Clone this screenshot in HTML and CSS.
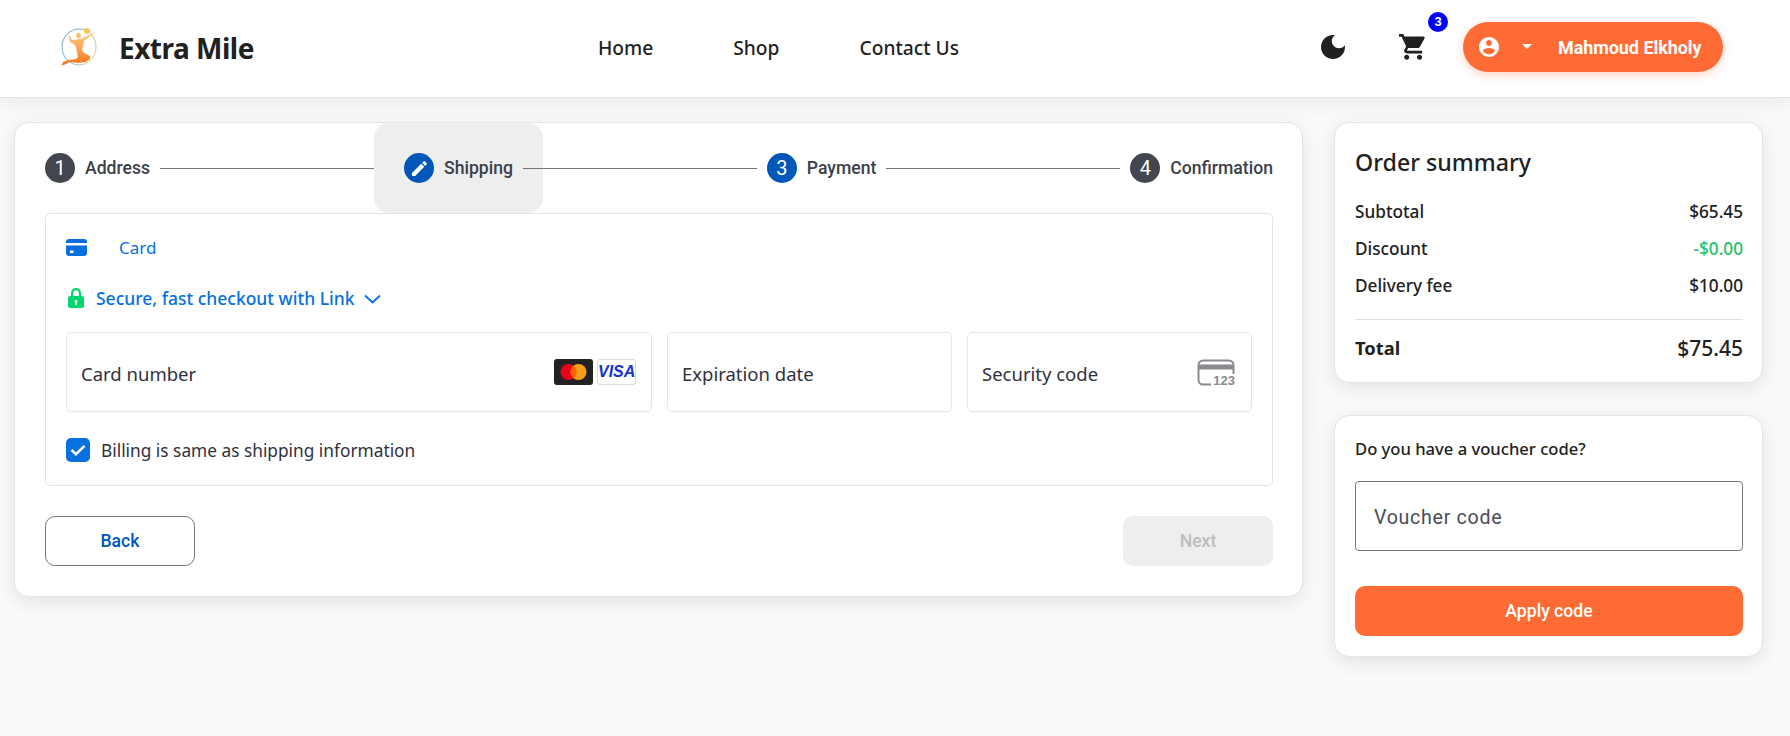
FILE: index.html
```html
<!DOCTYPE html>
<html lang="en">
<head>
    <meta charset="UTF-8">
    <title>Extra Mile - Checkout</title>
    <link rel="stylesheet" href="styles.css">
</head>
<body>
<header class="topbar">
    <a class="brand" href="#">
        <svg class="brand-logo" viewBox="0 0 38 40">
            <defs>
                <linearGradient id="ring" x1="0" y1="0" x2="1" y2="0.6">
                    <stop offset="0" stop-color="#4a86c8"/>
                    <stop offset="0.6" stop-color="#6f9fc9"/>
                    <stop offset="1" stop-color="#d9b860"/>
                </linearGradient>
                <linearGradient id="body" x1="0" y1="0" x2="0" y2="1">
                    <stop offset="0" stop-color="#fcd08a"/>
                    <stop offset="1" stop-color="#f5761f"/>
                </linearGradient>
            </defs>
            <ellipse cx="19" cy="20" rx="17" ry="18" fill="none" stroke="url(#ring)" stroke-width="0.8"/>
            <circle cx="27" cy="4" r="3" fill="#fbc64f"/>
            <circle cx="18.500" cy="8.500" r="2.500" fill="#fbbf73"/>
            <path fill="url(#body)" d="M37 4.500 29 10 24 14 23 19 22 23 24 26 30 29 30 32 26 35 18 36 10 35 5 37.500 1.500 38.500 3 35 8 33 16 32 18 30 17 25 16 20 14 17 10 15 8.500 9.500 10 9 11.500 12.500 15 13 18 12 22 11.500 29 8z"/>
        </svg>
        <span class="brand-name">Extra Mile</span>
    </a>
    <nav class="main-nav">
        <a href="#">Home</a>
        <a href="#">Shop</a>
        <a href="#">Contact Us</a>
    </nav>
    <div class="top-actions">
        <svg class="moon" viewBox="3 3 18 18"><path d="M12 3c-4.970 0-9 4.030-9 9s4.030 9 9 9 9-4.030 9-9c0-.46-.04-.92-.1-1.360-.98 1.370-2.580 2.260-4.400 2.260-2.980 0-5.400-2.420-5.400-5.400 0-1.810.89-3.420 2.260-4.400-.44-.06-.9-.1-1.360-.1z"/></svg>
        <div class="cart">
            <svg class="cart-icon" viewBox="1 2 21 20"><path d="M7 18c-1.100 0-1.990.9-1.990 2S5.900 22 7 22s2-.9 2-2-.9-2-2-2zM1 2v2h2l3.600 7.590-1.350 2.450c-.16.28-.25.61-.25.96 0 1.100.9 2 2 2h12v-2H7.420c-.14 0-.25-.11-.25-.25l.03-.12.9-1.830h7.450c.75 0 1.410-.41 1.750-1.030l3.580-6.490c.08-.14.12-.31.12-.48 0-.55-.45-1-1-1H5.210l-.94-2H1zm16 16c-1.100 0-1.990.9-1.990 2s.89 2 1.990 2 2-.9 2-2-.9-2-2-2z"/></svg>
            <span class="cart-badge">3</span>
        </div>
        <button class="profile-btn">
            <svg class="profile-icon" viewBox="2 2 20 20"><path d="M12 2C6.480 2 2 6.480 2 12s4.480 10 10 10 10-4.480 10-10S17.520 2 12 2zm0 3c1.660 0 3 1.340 3 3s-1.340 3-3 3-3-1.340-3-3 1.340-3 3-3zm0 14.200c-2.500 0-4.710-1.280-6-3.220.03-1.990 4-3.080 6-3.080 1.990 0 5.970 1.090 6 3.080-1.290 1.940-3.500 3.220-6 3.220z"/></svg>
            <span class="caret"></span>
            <span class="profile-name">Mahmoud Elkholy</span>
        </button>
    </div>
</header>

<main class="checkout">
    <section class="card checkout-card">
        <div class="stepper">
            <div class="step">
                <span class="step-num">1</span>
                <span class="step-label">Address</span>
            </div>
            <div class="step-line"></div>
            <div class="step step-current">
                <span class="step-num step-blue">
                    <svg class="edit-icon" viewBox="3 3 18 18"><path d="M3 17.250V21h3.750L17.810 9.940l-3.750-3.750L3 17.250zM20.710 7.040c.39-.39.39-1.020 0-1.410l-2.340-2.340c-.39-.39-1.020-.39-1.410 0l-1.830 1.830 3.750 3.750 1.830-1.830z"/></svg>
                </span>
                <span class="step-label">Shipping</span>
            </div>
            <div class="step-line"></div>
            <div class="step">
                <span class="step-num step-blue">3</span>
                <span class="step-label">Payment</span>
            </div>
            <div class="step-line"></div>
            <div class="step">
                <span class="step-num">4</span>
                <span class="step-label">Confirmation</span>
            </div>
        </div>

        <div class="pay-box">
            <div class="pay-tab">
                <svg class="tab-icon" viewBox="0 0 21 17"><path d="M0 3a3 3 0 0 1 3-3h15a3 3 0 0 1 3 3v1H0zM0 6.500h21V14a3 3 0 0 1-3 3H3a3 3 0 0 1-3-3zM4 11.500v2.500h3.500v-2.500z"/></svg>
                <span>Card</span>
            </div>
            <div class="link-row">
                <svg class="lock-icon" viewBox="0 0 16 20"><path d="M3 8V5a5 5 0 0 1 10 0v3h1a2 2 0 0 1 2 2v8a2 2 0 0 1-2 2H2a2 2 0 0 1-2-2v-8a2 2 0 0 1 2-2zm2.200 0h5.600V5a2.800 2.800 0 0 0-5.600 0zM8 12a1.500 1.500 0 0 0-.8 2.800V17h1.600v-2.200A1.500 1.500 0 0 0 8 12z" fill-rule="evenodd"/></svg>
                <span class="link-text">Secure, fast checkout with Link</span>
                <svg class="chevron" viewBox="0 0 17 10"><path d="M1 1.500 8.500 8.500 16 1.500" fill="none" stroke="#0570de" stroke-width="1.800"/></svg>
            </div>
            <div class="field-row">
                <div class="field field-wide">
                    <span>Card number</span>
                    <div class="card-logos">
                        <svg class="mc-logo" viewBox="0 0 39 26">
                            <rect width="39" height="26" rx="3" fill="#222"/>
                            <circle cx="14.500" cy="13" r="8" fill="#eb001b"/>
                            <circle cx="24.500" cy="13" r="8" fill="#f79e1b"/>
                            <path d="M19.500 6.750a8 8 0 0 1 0 12.500 8 8 0 0 1 0-12.500z" fill="#ff5f00"/>
                        </svg>
                        <span class="visa-logo">VISA</span>
                    </div>
                </div>
                <div class="field"><span>Expiration date</span></div>
                <div class="field">
                    <span>Security code</span>
                    <div class="cvc-icon">
                        <svg class="cvc-card" viewBox="0 0 38 27">
                            <path d="M14 25.500H6a4.500 4.500 0 0 1-4.500-4.500V6A4.500 4.500 0 0 1 6 1.500h26A4.500 4.500 0 0 1 36.500 6v9" fill="none" stroke="#8a8a8f" stroke-width="2"/>
                            <rect x="1" y="5.500" width="36" height="5" fill="#8a8a8f"/>
                        </svg>
                        <span class="cvc-text">123</span>
                    </div>
                </div>
            </div>
            <div class="billing-row">
                <span class="check-box">
                    <svg viewBox="0 0 16 12"><path d="M1.500 6 6 10.200 14.500 1.800" fill="none" stroke="#fff" stroke-width="2.600"/></svg>
                </span>
                <span>Billing is same as shipping information</span>
            </div>
        </div>

        <div class="form-actions">
            <button class="btn btn-back">Back</button>
            <button class="btn btn-next">Next</button>
        </div>
    </section>

    <aside class="side-col">
        <section class="card summary-card">
            <h2 class="summary-title">Order summary</h2>
            <div class="summary-row"><span>Subtotal</span><span>$65.45</span></div>
            <div class="summary-row"><span>Discount</span><span class="discount">-$0.00</span></div>
            <div class="summary-row"><span>Delivery fee</span><span>$10.00</span></div>
            <div class="summary-total"><strong>Total</strong><span class="total-price">$75.45</span></div>
        </section>
        <section class="card voucher-card">
            <div class="voucher-title">Do you have a voucher code?</div>
            <div class="voucher-input">Voucher code</div>
            <button class="btn btn-apply">Apply code</button>
        </section>
    </aside>
</main>
</body>
</html>
```

FILE: styles.css
```css
* {
    box-sizing: border-box;
}
body {
    margin: 0;
    min-height: 736px;
    background: #fafafa;
    color: #212121;
    font-family: "Noto Sans", sans-serif;
    overflow: hidden;
}
a {
    color: inherit;
    text-decoration: none;
}
button {
    border: 0;
    font-family: Roboto, sans-serif;
}

/* top bar */
.topbar {
    height: 98px;
    display: flex;
    align-items: center;
    padding: 0 67px 4px 60px;
    background: #fff;
    border-bottom: 1px solid #e2e2e2;
    box-shadow: 0 4px 20px rgba(0, 0, 0, .08);
}
.brand {
    display: flex;
    align-items: center;
    gap: 21px;
    width: 538px;
}
.brand-logo {
    width: 38px;
    height: 40px;
}
.brand-name {
    padding-top: 2px;
    font-size: 28px;
    font-weight: 700;
    letter-spacing: -.5px;
}
.main-nav {
    display: flex;
    gap: 80px;
    padding-top: 2px;
    font-size: 19.2px;
    font-weight: 500;
}
.top-actions {
    margin-left: auto;
    display: flex;
    align-items: center;
}
.moon {
    width: 24px;
    height: 24px;
    fill: #212121;
}
.cart {
    position: relative;
    margin-left: 54px;
    height: 26px;
}
.cart-icon {
    width: 27px;
    height: 26px;
    fill: #212121;
}
.cart-badge {
    position: absolute;
    top: -22px;
    left: 29px;
    width: 20px;
    height: 20px;
    border-radius: 50%;
    background: #0000ff;
    color: #fff;
    font: 700 13px/20px "Liberation Sans", sans-serif;
    text-align: center;
}
.profile-btn {
    width: 260px;
    height: 50px;
    margin-left: 37px;
    padding: 0 20px 0 16px;
    display: flex;
    align-items: center;
    border-radius: 25px;
    background: #ff6b35;
    color: #fff;
    box-shadow: 0 3px 10px rgba(255, 107, 53, .3);
}
.profile-icon {
    width: 20px;
    height: 20px;
    fill: #fff;
}
.caret {
    margin-left: 23px;
    border-left: 5px solid transparent;
    border-right: 5px solid transparent;
    border-top: 5px solid #fff;
}
.profile-name {
    margin-left: 26px;
    padding-top: 1px;
    font-size: 17.9px;
    font-weight: 700;
    white-space: nowrap;
}

/* page columns */
.checkout {
    display: flex;
    align-items: flex-start;
    gap: 31px;
    padding: 24px 27px 0 14px;
}
.card {
    background: #fff;
    border: 1px solid #e4e4e4;
    border-radius: 15px;
    box-shadow: 0 5px 20px rgba(0, 0, 0, .1);
}
.checkout-card {
    flex: 1;
    height: 475px;
    padding: 0 29px 0 30px;
}
.side-col {
    width: 429px;
    display: flex;
    flex-direction: column;
    gap: 32px;
}

/* stepper */
.stepper {
    display: flex;
    align-items: flex-start;
    height: 90px;
}
.step {
    display: flex;
    align-items: flex-start;
    gap: 10px;
    height: 90px;
    margin: 0 -30px;
    padding: 30px;
    border-radius: 15px;
    font-family: Roboto, sans-serif;
    font-size: 17.6px;
    font-weight: 500;
    color: #3c3f47;
}
.step-current {
    background: #eeeeee;
}
.step-num {
    width: 30px;
    height: 30px;
    display: flex;
    align-items: center;
    justify-content: center;
    border-radius: 50%;
    background: #43464f;
    color: #fff;
    font-size: 20px;
    font-weight: 400;
}
.step-blue {
    background: #0057b8;
}
.step-label {
    line-height: 30px;
}
.edit-icon {
    width: 15px;
    height: 15px;
    fill: #fff;
}
.step-line {
    flex: 1;
    height: 1px;
    margin: 45px 10px 0;
    background: #757575;
}

/* payment box */
.pay-box {
    height: 273px;
    padding: 23px 20px 0;
    border: 1px solid #e4e4e4;
    border-radius: 5px;
    color: #30313d;
}
.pay-tab {
    display: flex;
    align-items: center;
    gap: 32px;
    height: 20px;
    font-size: 17px;
    color: #0570de;
}
.tab-icon {
    width: 21px;
    height: 17px;
    fill: #0570de;
}
.link-row {
    display: flex;
    align-items: center;
    margin: 29px 0 0 2px;
    height: 24px;
    font-size: 17.5px;
    font-weight: 500;
    color: #0570de;
}
.lock-icon {
    width: 16px;
    height: 20px;
    fill: #00d66f;
}
.link-text {
    margin-left: 12px;
}
.chevron {
    width: 17px;
    height: 10px;
    margin: 2px 0 0 10px;
}
.field-row {
    display: flex;
    gap: 15px;
    margin-top: 22px;
}
.field {
    flex: 1;
    height: 80px;
    display: flex;
    align-items: center;
    justify-content: space-between;
    padding: 3px 14px 0;
    border: 1px solid #e6e6e6;
    border-radius: 5px;
    box-shadow: 0 1px 2px rgba(0, 0, 0, .03);
    font-size: 18.5px;
}
.field-wide {
    flex: none;
    width: 586px;
}
.card-logos {
    display: flex;
    gap: 4px;
    margin: -3px 1px 0 0;
}
.mc-logo {
    width: 39px;
    height: 26px;
}
.visa-logo {
    width: 39px;
    height: 26px;
    border: 1px solid #d8d8de;
    border-radius: 3px;
    color: #1434cb;
    font: italic 700 16px/24px "Liberation Sans", sans-serif;
    text-align: center;
}
.cvc-icon {
    position: relative;
    width: 38px;
    height: 27px;
    margin: -3px 2px 0 0;
}
.cvc-card {
    display: block;
    width: 38px;
    height: 27px;
}
.cvc-text {
    position: absolute;
    right: 0;
    bottom: -2px;
    font: 700 13px/14px "Liberation Sans", sans-serif;
    color: #8a8a8f;
}
.billing-row {
    display: flex;
    align-items: center;
    gap: 11px;
    margin-top: 26px;
    font-size: 17.3px;
}
.check-box {
    width: 24px;
    height: 24px;
    display: flex;
    align-items: center;
    justify-content: center;
    border-radius: 5px;
    background: #0570de;
}
.check-box svg {
    width: 16px;
    height: 12px;
}

/* buttons */
.form-actions {
    display: flex;
    justify-content: space-between;
    margin-top: 30px;
}
.btn {
    height: 50px;
    font-size: 17.6px;
    font-weight: 500;
    border-radius: 10px;
}
.btn-back,
.btn-next {
    width: 150px;
}
.btn-back {
    background: #fff;
    border: 1px solid #757575;
    color: #0057b8;
}
.btn-next {
    background: #eeeeee;
    color: #bdbdbd;
}
.btn-apply {
    width: 100%;
    margin-top: 35px;
    background: #ff6b35;
    color: #fff;
}

/* order summary */
.summary-card {
    height: 261px;
    padding: 20px 19px 0 20px;
}
.summary-title {
    margin: 0 0 18px;
    font-size: 23.2px;
    font-weight: 500;
    line-height: 38px;
}
.summary-row {
    display: flex;
    justify-content: space-between;
    height: 37px;
    font-size: 17.2px;
    font-weight: 500;
    line-height: 25px;
}
.discount {
    color: #1fc16b;
}
.summary-total {
    display: flex;
    justify-content: space-between;
    align-items: center;
    margin-top: 9px;
    height: 56px;
    border-top: 1px solid #e0e0e0;
}
.summary-total strong {
    font-size: 18.4px;
    font-weight: 700;
}
.total-price {
    font-size: 21px;
    font-weight: 500;
}

/* voucher */
.voucher-card {
    height: 242px;
    padding: 20px 19px 0 20px;
}
.voucher-title {
    font-size: 16.6px;
    font-weight: 500;
    line-height: 26px;
}
.voucher-input {
    height: 70px;
    margin-top: 19px;
    padding: 0 18px;
    border: 1px solid #757575;
    border-radius: 4px;
    font-family: Roboto, sans-serif;
    font-size: 19.6px;
    letter-spacing: .7px;
    line-height: 71px;
    color: #4a4d55;
}
```
